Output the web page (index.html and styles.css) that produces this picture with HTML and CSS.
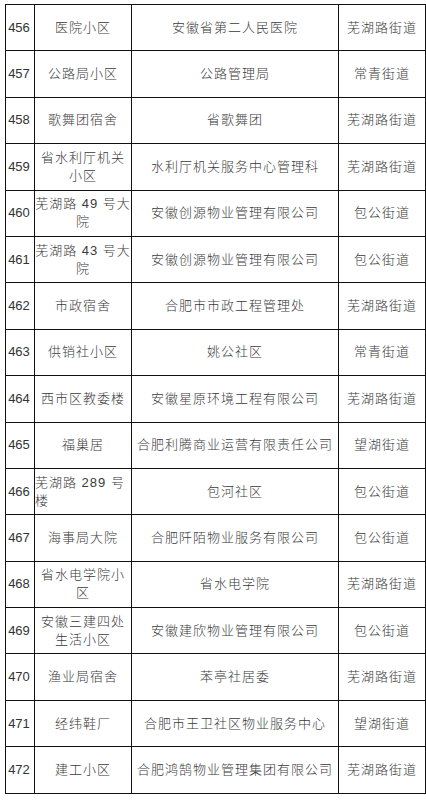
FILE: index.html
```html
<!DOCTYPE html>
<html lang="zh-CN">
<head>
<meta charset="utf-8">
<title>小区名单</title>
<link rel="stylesheet" href="styles.css">
</head>
<body>
<div class="sheet">
  <div class="c num">456</div><div class="c">医院小区</div><div class="c">安徽省第二人民医院</div><div class="c">芜湖路街道</div>
  <div class="c num">457</div><div class="c">公路局小区</div><div class="c">公路管理局</div><div class="c">常青街道</div>
  <div class="c num">458</div><div class="c">歌舞团宿舍</div><div class="c">省歌舞团</div><div class="c">芜湖路街道</div>
  <div class="c num">459</div><div class="c"><span>省水利厅机关<br>小区</span></div><div class="c">水利厅机关服务中心管理科</div><div class="c">芜湖路街道</div>
  <div class="c num">460</div><div class="c"><span>芜湖路 49 号大<br>院</span></div><div class="c">安徽创源物业管理有限公司</div><div class="c">包公街道</div>
  <div class="c num">461</div><div class="c"><span>芜湖路 43 号大<br>院</span></div><div class="c">安徽创源物业管理有限公司</div><div class="c">包公街道</div>
  <div class="c num">462</div><div class="c">市政宿舍</div><div class="c">合肥市市政工程管理处</div><div class="c">芜湖路街道</div>
  <div class="c num">463</div><div class="c">供销社小区</div><div class="c">姚公社区</div><div class="c">常青街道</div>
  <div class="c num">464</div><div class="c">西市区教委楼</div><div class="c">安徽星原环境工程有限公司</div><div class="c">芜湖路街道</div>
  <div class="c num">465</div><div class="c">福巢居</div><div class="c">合肥利腾商业运营有限责任公司</div><div class="c">望湖街道</div>
  <div class="c num">466</div><div class="c left"><span>芜湖路 289 号<br>楼</span></div><div class="c">包河社区</div><div class="c">包公街道</div>
  <div class="c num">467</div><div class="c">海事局大院</div><div class="c">合肥阡陌物业服务有限公司</div><div class="c">包公街道</div>
  <div class="c num">468</div><div class="c"><span>省水电学院小<br>区</span></div><div class="c">省水电学院</div><div class="c">芜湖路街道</div>
  <div class="c num">469</div><div class="c"><span>安徽三建四处<br>生活小区</span></div><div class="c">安徽建欣物业管理有限公司</div><div class="c">包公街道</div>
  <div class="c num">470</div><div class="c">渔业局宿舍</div><div class="c">苯亭社居委</div><div class="c">芜湖路街道</div>
  <div class="c num">471</div><div class="c">经纬鞋厂</div><div class="c">合肥市王卫社区物业服务中心</div><div class="c">望湖街道</div>
  <div class="c num">472</div><div class="c">建工小区</div><div class="c">合肥鸿鹄物业管理集团有限公司</div><div class="c">芜湖路街道</div>
</div>
</body>
</html>
```
FILE: styles.css
```css
html, body {
  margin: 0;
  padding: 0;
  background: #ffffff;
}
body {
  padding: 4px 0 0 5px;
}
.sheet {
  display: grid;
  grid-template-columns: 29px 97px 207px 87px;
  grid-auto-rows: 46.4px;
  width: 420px;
  border-top: 1px solid #111;
  border-left: 1px solid #111;
  font-family: "Liberation Sans", "Noto Sans CJK SC", sans-serif;
  font-size: 13px;
  font-weight: 300;
  color: #3a3a3a;
  letter-spacing: 1px;
}
.c {
  display: flex;
  align-items: center;
  justify-content: center;
  text-align: center;
  border-right: 1px solid #111;
  border-bottom: 1px solid #111;
  white-space: nowrap;
  line-height: 18px;
  overflow: visible;
}
.c span {
  display: block;
  width: 100%;
}
.num {
  font-family: "Liberation Sans", sans-serif;
  font-weight: 400;
  letter-spacing: 0;
  color: #333;
  padding-right: 2px;
}
.left {
  justify-content: flex-start;
  text-align: left;
}
```
